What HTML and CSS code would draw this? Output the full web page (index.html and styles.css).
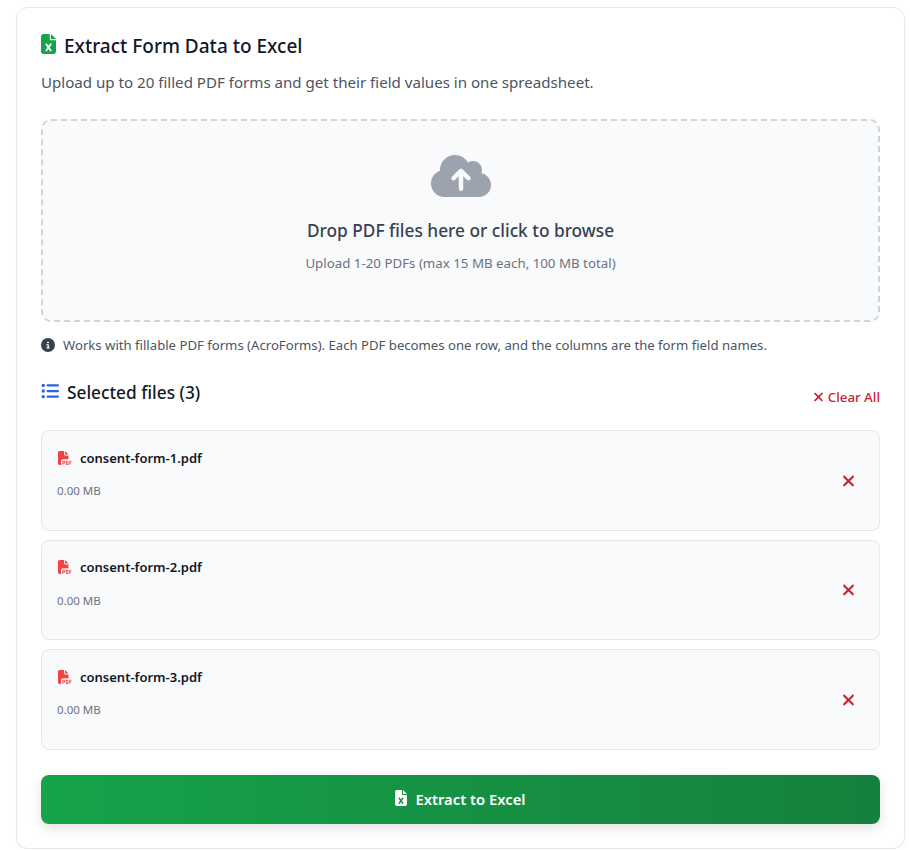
FILE: index.html
```html
<!DOCTYPE html>
<html lang="en">
<head>
  <meta charset="UTF-8">
  <meta name="viewport" content="width=device-width, initial-scale=1.0">
  <title>Extract Form Data to Excel</title>
  <link rel="stylesheet" href="styles.css">
</head>
<body>

  <svg class="icon-defs" xmlns="http://www.w3.org/2000/svg">
    <symbol id="file-excel" viewBox="0 0 384 512"><path d="M64 0C28.7 0 0 28.7 0 64V448c0 35.3 28.7 64 64 64H320c35.3 0 64-28.7 64-64V160H256c-17.7 0-32-14.3-32-32V0H64zM256 0V128H384L256 0zM155.700 250.200L192 302.100l36.300-51.900c7.600-10.900 22.600-13.500 33.400-5.900s13.500 22.600 5.900 33.400L221.300 344l46.400 66.200c7.600 10.900 5 25.800-5.900 33.400s-25.800 5-33.400-5.900L192 385.800l-36.300 51.900c-7.600 10.900-22.600 13.500-33.400 5.900s-13.500-22.600-5.900-33.400L162.700 344l-46.400-66.200c-7.600-10.900-5-25.800 5.900-33.400s25.800-5 33.400 5.900z"/></symbol>
    <symbol id="cloud-up" viewBox="0 0 640 512"><path d="M144 480C64.500 480 0 415.500 0 336c0-62.800 40.200-116.200 96.200-135.900c-.1-2.700-.2-5.400-.2-8.100c0-88.400 71.600-160 160-160c59.300 0 111 32.200 138.700 80.200C409.900 102 428.300 96 448 96c53 0 96 43 96 96c0 12.200-2.300 23.800-6.400 34.600C596 238.400 640 290.100 640 352c0 70.700-57.300 128-128 128H144zm79-217c-9.400 9.400-9.400 24.600 0 33.900s24.600 9.400 33.900 0l39-39V392c0 13.300 10.700 24 24 24s24-10.700 24-24V257.900l39 39c9.400 9.400 24.600 9.400 33.900 0s9.400-24.600 0-33.900l-80-80c-9.400-9.400-24.600-9.400-33.900 0l-80 80z"/></symbol>
    <symbol id="circle-info" viewBox="0 0 512 512"><path d="M256 512A256 256 0 1 0 256 0a256 256 0 1 0 0 512zM216 336h24V272H216c-13.300 0-24-10.700-24-24s10.700-24 24-24h48c13.300 0 24 10.700 24 24v88h8c13.300 0 24 10.700 24 24s-10.700 24-24 24H216c-13.300 0-24-10.700-24-24s10.700-24 24-24zm40-208a32 32 0 1 1 0 64 32 32 0 1 1 0-64z"/></symbol>
    <symbol id="list-ul" viewBox="0 0 512 512"><path d="M64 144a48 48 0 1 0 0-96 48 48 0 1 0 0 96zM192 64c-17.700 0-32 14.300-32 32s14.300 32 32 32H480c17.700 0 32-14.300 32-32s-14.300-32-32-32H192zm0 160c-17.700 0-32 14.300-32 32s14.300 32 32 32H480c17.700 0 32-14.300 32-32s-14.300-32-32-32H192zm0 160c-17.700 0-32 14.300-32 32s14.300 32 32 32H480c17.700 0 32-14.300 32-32s-14.300-32-32-32H192zM64 464a48 48 0 1 0 0-96 48 48 0 1 0 0 96zm48-208a48 48 0 1 0 -96 0 48 48 0 1 0 96 0z"/></symbol>
    <symbol id="xmark" viewBox="0 0 384 512"><path d="M342.600 150.600c12.500-12.500 12.500-32.800 0-45.300s-32.800-12.500-45.300 0L192 210.700 86.600 105.400c-12.500-12.500-32.800-12.500-45.300 0s-12.500 32.800 0 45.300L146.700 256 41.400 361.400c-12.500 12.500-12.500 32.800 0 45.300s32.800 12.500 45.300 0L192 301.300 297.400 406.600c12.500 12.500 32.800 12.500 45.300 0s12.500-32.800 0-45.300L237.300 256 342.600 150.600z"/></symbol>
    <symbol id="file-pdf" viewBox="0 0 512 512"><path d="M0 64C0 28.700 28.700 0 64 0H224V128c0 17.700 14.300 32 32 32H384V304H176c-35.300 0-64 28.700-64 64V512H64c-35.300 0-64-28.700-64-64V64zm384 64H256V0L384 128zM176 352h32c30.900 0 56 25.100 56 56s-25.100 56-56 56H192v32c0 8.800-7.200 16-16 16s-16-7.200-16-16V448 368c0-8.800 7.200-16 16-16zm32 80c13.300 0 24-10.700 24-24s-10.700-24-24-24H192v48h16zm96-80h32c26.500 0 48 21.500 48 48v64c0 26.500-21.500 48-48 48H304c-8.800 0-16-7.200-16-16V368c0-8.800 7.200-16 16-16zm32 128c8.800 0 16-7.200 16-16V400c0-8.800-7.200-16-16-16H320v96h16zm80-112c0-8.800 7.200-16 16-16h48c8.800 0 16 7.200 16 16s-7.200 16-16 16H448v32h32c8.800 0 16 7.200 16 16s-7.200 16-16 16H448v48c0 8.800-7.200 16-16 16s-16-7.200-16-16V432 368z"/></symbol>
  </svg>

  <main class="card">
    <h1 class="title">
      <svg class="title-icon"><use href="#file-excel"/></svg>
      Extract Form Data to Excel
    </h1>
    <p class="subtitle">Upload up to 20 filled PDF forms and get their field values in one spreadsheet.</p>

    <!-- Drop zone -->
    <div class="dropzone">
      <svg class="cloud-icon"><use href="#cloud-up"/></svg>
      <p class="drop-title">Drop PDF files here or click to browse</p>
      <p class="drop-hint">Upload 1-20 PDFs (max 15 MB each, 100 MB total)</p>
    </div>

    <p class="note">
      <svg class="note-icon"><use href="#circle-info"/></svg>
      Works with fillable PDF forms (AcroForms). Each PDF becomes one row, and the columns are the form field names.
    </p>

    <!-- Selected files -->
    <div class="files-header">
      <h2 class="files-title">
        <svg class="list-icon"><use href="#list-ul"/></svg>
        Selected files (3)
      </h2>
      <button class="clear-all">
        <svg class="clear-icon"><use href="#xmark"/></svg>
        Clear All
      </button>
    </div>

    <ul class="file-list">
      <li class="file-item">
        <div class="file-info">
          <div class="file-name"><svg class="pdf-icon"><use href="#file-pdf"/></svg>consent-form-1.pdf</div>
          <div class="file-size">0.00 MB</div>
        </div>
        <button class="remove"><svg class="remove-icon"><use href="#xmark"/></svg></button>
      </li>
      <li class="file-item">
        <div class="file-info">
          <div class="file-name"><svg class="pdf-icon"><use href="#file-pdf"/></svg>consent-form-2.pdf</div>
          <div class="file-size">0.00 MB</div>
        </div>
        <button class="remove"><svg class="remove-icon"><use href="#xmark"/></svg></button>
      </li>
      <li class="file-item">
        <div class="file-info">
          <div class="file-name"><svg class="pdf-icon"><use href="#file-pdf"/></svg>consent-form-3.pdf</div>
          <div class="file-size">0.00 MB</div>
        </div>
        <button class="remove"><svg class="remove-icon"><use href="#xmark"/></svg></button>
      </li>
    </ul>

    <button class="submit">
      <svg class="submit-icon"><use href="#file-excel"/></svg>
      Extract to Excel
    </button>
  </main>

</body>
</html>
```

FILE: styles.css
```css
* {
  box-sizing: border-box;
}
body {
  margin: 0;
  padding: 7px 5px 0 16px;
  background-color: #fff;
  color: #111827;
  font-family: "Noto Sans", "Open Sans", Arial, sans-serif;
}
button {
  font-family: inherit;
  background: none;
  border: none;
  padding: 0;
  cursor: pointer;
}
.icon-defs {
  display: none;
}
.card {
  width: 889px;
  height: 842px;
  padding: 24px;
  background-color: #fff;
  border: 1px solid #e5e7eb;
  border-radius: 12px;
  box-shadow: 0 1px 3px rgba(0, 0, 0, 0.04);
}
.title {
  display: flex;
  align-items: center;
  gap: 8px;
  margin: 2px 0 0;
  height: 24px;
  font-size: 19px;
  font-weight: 500;
  color: #111827;
}
.title-icon {
  width: 15px;
  height: 20px;
  margin-top: -4px;
  fill: #16a34a;
}
.subtitle {
  margin: 12px 0 0;
  height: 24px;
  font-size: 15.1px;
  line-height: 24px;
  color: #4b5563;
}
.dropzone {
  display: flex;
  flex-direction: column;
  align-items: center;
  height: 203px;
  margin-top: 25px;
  padding-top: 31px;
  background-color: #f9fafb;
  border: 2px dashed #d1d5db;
  border-radius: 10px;
}
.cloud-icon {
  width: 60px;
  height: 48px;
  fill: #9ca3af;
}
.drop-title {
  margin: 17px 0 0;
  font-size: 17.3px;
  line-height: 28px;
  font-weight: 500;
  color: #374151;
}
.drop-hint {
  margin: 8px 0 0;
  font-size: 13.3px;
  line-height: 20px;
  color: #6b7280;
}
.note {
  display: flex;
  align-items: center;
  gap: 8px;
  margin: 13px 0 0;
  font-size: 13.15px;
  line-height: 20px;
  color: #4b5563;
}
.note-icon {
  width: 14px;
  height: 14px;
  fill: #374151;
}
.files-header {
  display: flex;
  justify-content: space-between;
  align-items: flex-end;
  height: 33px;
  margin-top: 21px;
}
.files-title {
  display: flex;
  align-items: center;
  gap: 8px;
  margin: 0 0 5px;
  font-size: 17.3px;
  font-weight: 500;
  color: #111827;
}
.list-icon {
  width: 18px;
  height: 18px;
  margin-top: -3px;
  fill: #2563eb;
}
.clear-all {
  display: flex;
  align-items: center;
  gap: 4px;
  margin-bottom: 2px;
  font-size: 13.3px;
  line-height: 20px;
  font-weight: 500;
  color: #c82333;
}
.clear-icon {
  width: 11px;
  height: 14px;
  fill: #c82333;
}
.file-list {
  display: flex;
  flex-direction: column;
  gap: 9px;
  margin: 21px 0 0;
  padding: 0;
  list-style: none;
}
.file-item {
  display: flex;
  justify-content: space-between;
  align-items: center;
  height: 100.5px;
  padding: 0 24px 0 16px;
  background-color: #f9fafb;
  border: 1px solid #e5e7eb;
  border-radius: 8px;
}
.file-info {
  align-self: flex-start;
  margin-top: 16.5px;
}
.file-name {
  display: flex;
  align-items: center;
  gap: 8px;
  font-size: 13px;
  line-height: 20px;
  font-weight: 600;
  color: #111827;
}
.pdf-icon {
  width: 14px;
  height: 14px;
  fill: #ef4444;
}
.file-size {
  margin-top: 13.5px;
  margin-left: -1px;
  font-size: 11.5px;
  line-height: 20px;
  color: #6b7280;
}
.remove {
  display: flex;
  margin-top: 1px;
}
.remove-icon {
  width: 13px;
  height: 18px;
  fill: #c82333;
}
.submit {
  display: flex;
  justify-content: center;
  align-items: center;
  gap: 8px;
  width: 100%;
  height: 49px;
  margin-top: 25px;
  font-size: 14.8px;
  font-weight: 600;
  color: #fff;
  background: linear-gradient(90deg, #16a34a, #15803d);
  border-radius: 8px;
  box-shadow: 0 4px 12px rgba(0, 0, 0, 0.12);
}
.submit-icon {
  width: 12px;
  height: 16px;
  margin-top: -3px;
  fill: #fff;
}
```
